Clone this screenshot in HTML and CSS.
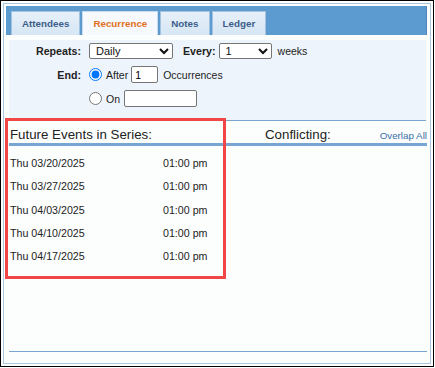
FILE: index.html
```html
<!DOCTYPE html>
<html lang="en">
<head>
  <meta charset="UTF-8">
  <meta name="viewport" content="width=device-width, initial-scale=1.0">
  <title>Recurrence</title>
  <link rel="stylesheet" href="styles.css">
</head>
<body>
  <div class="frame">
    <div class="panel">
      <div class="tabs">
        <button class="tab">Attendees</button>
        <button class="tab active">Recurrence</button>
        <button class="tab">Notes</button>
        <button class="tab">Ledger</button>
      </div>
      <div class="tab-body">
        <div class="recur-form">
          <label class="field-label">Repeats:</label>
          <div class="field-row">
            <select class="sel-repeat">
              <option>Daily</option>
              <option>Weekly</option>
              <option>Monthly</option>
            </select>
            <span class="field-label every">Every:</span>
            <select class="sel-every">
              <option>1</option>
              <option>2</option>
              <option>3</option>
            </select>
            <span class="weeks">weeks</span>
          </div>
          <label class="field-label">End:</label>
          <div class="field-row">
            <input type="radio" name="end" checked>
            <span>After</span>
            <input type="text" class="txt-count" value="1">
            <span class="occ">Occurrences</span>
          </div>
          <span></span>
          <div class="field-row">
            <input type="radio" name="end">
            <span>On</span>
            <input type="text" class="txt-date">
          </div>
        </div>
        <div class="series">
          <div class="series-head">
            <span class="head-title">Future Events in Series:</span>
            <span class="head-title">Conflicting:</span>
            <a class="overlap-link" href="#">Overlap All</a>
          </div>
          <div class="series-rows">
            <div class="series-row"><span>Thu 03/20/2025</span><span>01:00 pm</span></div>
            <div class="series-row"><span>Thu 03/27/2025</span><span>01:00 pm</span></div>
            <div class="series-row"><span>Thu 04/03/2025</span><span>01:00 pm</span></div>
            <div class="series-row"><span>Thu 04/10/2025</span><span>01:00 pm</span></div>
            <div class="series-row"><span>Thu 04/17/2025</span><span>01:00 pm</span></div>
          </div>
        </div>
        <div class="series-foot"></div>
      </div>
    </div>
    <div class="highlight"></div>
  </div>
</body>
</html>
```

FILE: styles.css
```css
body {
  margin: 0;
  padding: 0;
  background: #fff;
  font-family: "Liberation Sans", Arial, sans-serif;
  color: #222;
}
.frame {
  position: relative;
  width: 434px;
  height: 367px;
  box-sizing: border-box;
  border: 1px solid #000;
  padding: 2px;
  background: #fff;
}
.panel {
  height: 100%;
  box-sizing: border-box;
  border: 1px solid #a9c7df;
  padding: 2px 2px 2px 2px;
  display: flex;
  flex-direction: column;
  background: #fcfefe;
}
.tabs {
  display: flex;
  align-items: flex-end;
  gap: 2px;
  height: 29px;
  box-sizing: border-box;
  padding: 0 5px;
  margin-right: 1px;
  background: #5b9bd0;
  border-right: 1px solid #4a87bd;
}
.tab {
  height: 24px;
  padding: 0 10px;
  border: 1px solid #a3c3e0;
  border-bottom: none;
  background: linear-gradient(#e6f0f9, #d6e6f4);
  color: #3c5d8a;
  font-family: "Liberation Sans", Arial, sans-serif;
  font-size: 9.8px;
  font-weight: bold;
  cursor: pointer;
}
.tab.active {
  background: #f6f9fd;
  border-color: #c9dcee;
  color: #e2701f;
}
.tab-body {
  flex: 1;
  display: flex;
  flex-direction: column;
  margin: 5px 1px 0 3px;
}
.recur-form {
  display: grid;
  grid-template-columns: 72px auto;
  column-gap: 8px;
  row-gap: 7px;
  align-items: center;
  padding: 3px 0 13px;
  margin-right: 1px;
  background: #eef4fb;
  border-bottom: 1px solid #7aa7d0;
  font-size: 10.5px;
}
.field-label {
  text-align: right;
  font-size: 10.67px;
  font-weight: bold;
  color: #222;
}
.field-row {
  display: flex;
  align-items: center;
  height: 17px;
  gap: 3px;
}
.field-row:first-of-type {
  height: 16px;
}
select {
  height: 16px;
  box-sizing: border-box;
  padding: 0 2px;
  border: 1px solid #767676;
  border-radius: 2px;
  background: #fff;
  font-family: "Liberation Sans", Arial, sans-serif;
  font-size: 11px;
  color: #111;
}
.sel-repeat {
  width: 84px;
}
.sel-every {
  width: 53px;
}
.every {
  margin-left: 7px;
}
.weeks {
  margin-left: 3px;
}
input[type="radio"] {
  width: 13px;
  height: 13px;
  margin: 0 1px 0 0;
}
input[type="text"] {
  height: 17px;
  box-sizing: border-box;
  padding: 0 3px;
  border: 1px solid #767676;
  border-radius: 2px;
  font-family: "Liberation Sans", Arial, sans-serif;
  font-size: 10.5px;
}
.txt-count {
  width: 27px;
}
.txt-date {
  width: 73px;
  margin-left: 1px;
}
.occ {
  margin-left: 2px;
}
.series {
  flex: 1;
}
.series-head {
  display: grid;
  grid-template-columns: 255px 1fr auto;
  align-items: baseline;
  padding: 6px 0 0 1px;
  border-bottom: 3px solid #78a6d2;
}
.head-title {
  font-size: 13.3px;
  line-height: 16px;
  color: #222;
}
.overlap-link {
  font-size: 9.8px;
  color: #3b6ea6;
  text-decoration: none;
}
.series-rows {
  margin-top: 6px;
  padding-left: 1px;
}
.series-row {
  display: grid;
  grid-template-columns: 153px auto;
  height: 23.33px;
  line-height: 23.33px;
  font-size: 10.67px;
  color: #222;
}
.series-foot {
  height: 9px;
  border-top: 1px solid #7aa7d0;
}
.highlight {
  position: absolute;
  left: 4px;
  top: 117px;
  width: 221px;
  height: 161px;
  box-sizing: border-box;
  border: 3px solid #f24646;
}
```
